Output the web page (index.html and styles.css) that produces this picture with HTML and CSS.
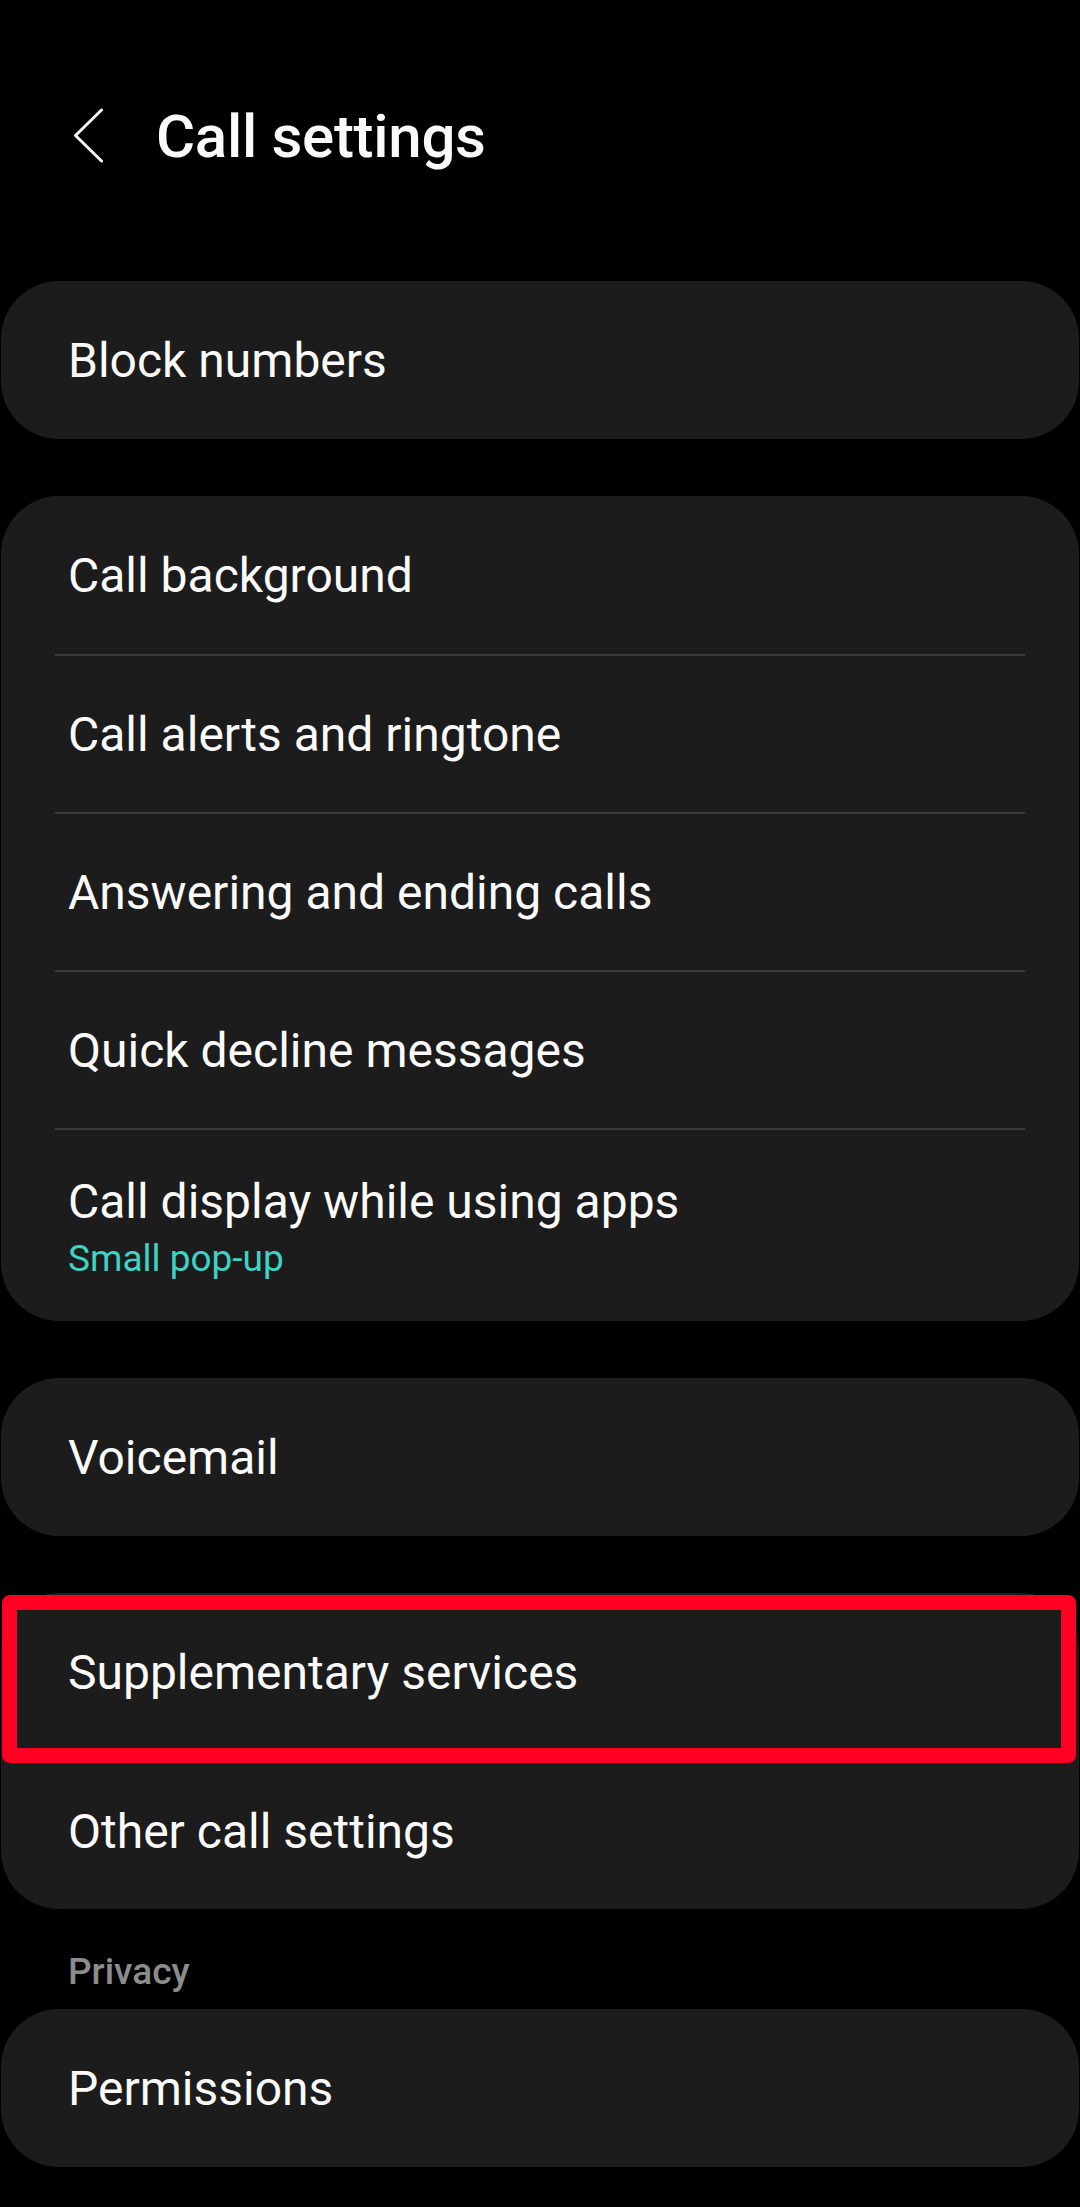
FILE: index.html
```html
<!DOCTYPE html>
<html lang="en">
<head>
<meta charset="utf-8">
<title>Call settings</title>
<link rel="stylesheet" href="styles.css">
</head>
<body>
<div class="screen">
  <header class="app-bar">
    <span class="back">
      <svg width="31" height="55" viewBox="0 0 31 55" aria-hidden="true">
        <polyline points="28.5,2 2.5,27.5 28.5,53" fill="none" stroke="#f5f5f5" stroke-width="3" stroke-linecap="round" stroke-linejoin="round"/>
      </svg>
    </span>
    <h1 class="title">Call settings</h1>
  </header>

  <section class="card">
    <div class="row">Block numbers</div>
  </section>

  <section class="card">
    <div class="row">Call background</div>
    <div class="row">Call alerts and ringtone</div>
    <div class="row">Answering and ending calls</div>
    <div class="row">Quick decline messages</div>
    <div class="row row-two">
      <span class="row-title">Call display while using apps</span>
      <span class="row-sub">Small pop-up</span>
    </div>
  </section>

  <section class="card">
    <div class="row">Voicemail</div>
  </section>

  <section class="card card-marked">
    <div class="row">Supplementary services</div>
    <div class="row">Other call settings</div>
    <div class="highlight"></div>
  </section>

  <div class="section-label">Privacy</div>

  <section class="card">
    <div class="row">Permissions</div>
  </section>
</div>
</body>
</html>
```

FILE: styles.css
```css
html, body {
  margin: 0;
  padding: 0;
  background: #000;
}

.screen {
  width: 1080px;
  min-height: 2207px;
  background: #000;
  font-family: Roboto, "Noto Sans", "Liberation Sans", sans-serif;
  color: #fafafa;
  display: flex;
  flex-direction: column;
  gap: 57px;
}

.app-bar {
  display: flex;
  align-items: center;
  height: 224px;
  padding-top: 50px;
  box-sizing: border-box;
}

.back {
  display: flex;
  margin-left: 73px;
  width: 31px;
  height: 55px;
  margin-top: -4px;
}

.title {
  margin: 0 0 0 52px;
  font-size: 60px;
  font-weight: 500;
  line-height: 1;
  letter-spacing: -0.3px;
  color: #fafafa;
}

.card {
  position: relative;
  margin: 0 1px;
  background: #1c1c1c;
  border-radius: 58px;
  display: flex;
  flex-direction: column;
}

.row {
  display: flex;
  align-items: center;
  height: 158px;
  padding-left: 67px;
  padding-top: 2px;
  font-size: 48px;
  line-height: 1;
  color: #fafafa;
  box-sizing: border-box;
}

.card .row + .row {
  border-top: 2px solid #3a3a3a;
  border-image: linear-gradient(to right, transparent 55px, #3a3a3a 55px, #3a3a3a 1023px, transparent 1023px) 1;
}

.row-two {
  height: 193px;
  flex-direction: column;
  align-items: flex-start;
  justify-content: center;
  gap: 11px;
  padding-top: 6px;
}

.row-title {
  font-size: 48px;
  line-height: 1.05;
}

.row-sub {
  font-size: 37px;
  line-height: 1.1;
  color: #3dd4c6;
}

.highlight {
  position: absolute;
  left: 1px;
  top: 2px;
  width: 1074px;
  height: 168px;
  border: 15px solid #ff0022;
  border-radius: 8px;
  box-sizing: border-box;
  pointer-events: none;
}

.section-label {
  margin: -13px 0 -38px 0;
  padding-left: 68px;
  font-size: 37px;
  font-weight: 500;
  line-height: 1;
  color: #8c8c8c;
}
```
